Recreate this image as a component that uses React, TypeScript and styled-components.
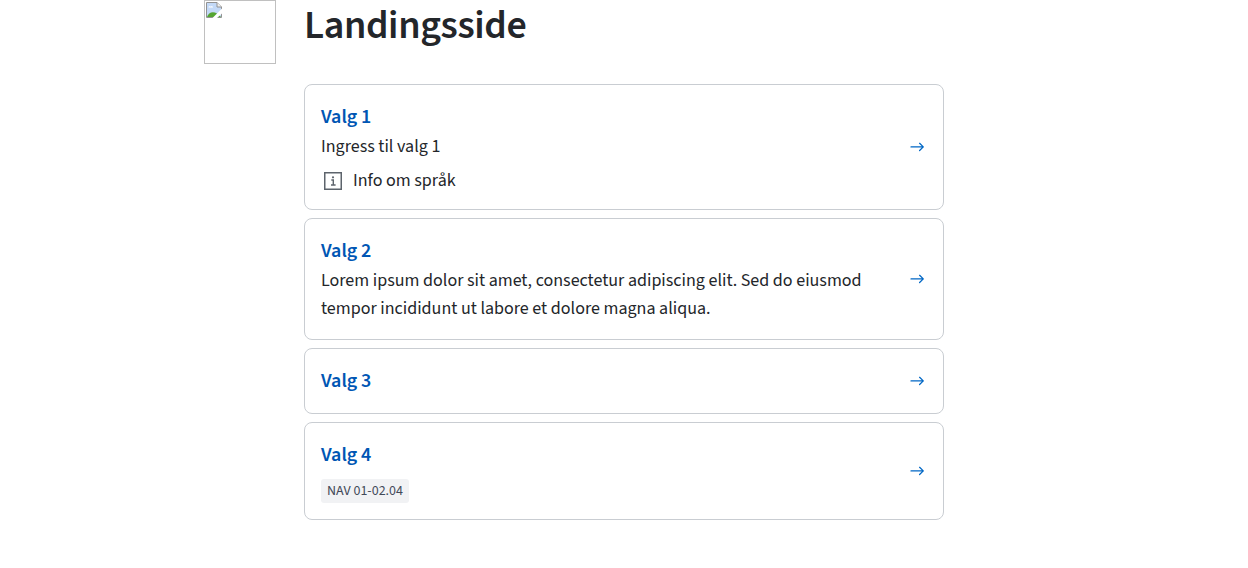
import React from "react";
import styled, { createGlobalStyle } from "styled-components";

const GlobalStyle = createGlobalStyle`
  *, *::before, *::after { box-sizing: border-box; }
  body {
    margin: 0;
    background: #fff;
    color: #23262a;
    font-family: "Source Sans 3", "Noto Sans CJK SC", sans-serif;
    font-size: 18px;
    line-height: 28px;
    -webkit-font-smoothing: antialiased;
  }
`;

const Page = styled.main`
  display: grid;
  grid-template-columns: 72px 640px;
  column-gap: 28px;
  padding-left: 204px;
  align-items: start;
`;

const ImageFrame = styled.div`
  width: 72px;
  height: 64px;
  border: 1px solid #c0c0c0;
  padding: 1px;
  line-height: 0;
`;

const Heading = styled.h1`
  margin: 0 0 32px;
  font-size: 40px;
  line-height: 52px;
  font-weight: 600;
  letter-spacing: -0.01em;
`;

const Cards = styled.div`
  display: flex;
  flex-direction: column;
  gap: 8px;
`;

const Card = styled.a`
  display: flex;
  align-items: center;
  justify-content: space-between;
  padding: 16px;
  border: 1px solid #c9cdd2;
  border-radius: 8px;
  color: inherit;
  text-decoration: none;
`;

const CardBody = styled.div`
  width: 560px;
`;

const Title = styled.h2`
  margin: 0;
  font-size: 20px;
  line-height: 32px;
  font-weight: 600;
  letter-spacing: -0.002em;
  color: #0056b4;
`;

const Text = styled.p`
  margin: 0;
`;

const InfoRow = styled.div`
  display: flex;
  align-items: center;
  gap: 8px;
  margin-top: 8px;
  line-height: 24px;
`;

const Tag = styled.span`
  display: flex;
  align-items: center;
  justify-content: center;
  width: 88px;
  height: 24px;
  margin-top: 8px;
  border-radius: 3px;
  background: #f1f2f4;
  color: #414958;
  font-size: 14px;
  line-height: 20px;
  white-space: nowrap;
`;

const Icon = styled.svg`
  display: block;
  flex: none;
`;

const Arrow = () => (
  <Icon width="20" height="20" viewBox="0 0 20 20" fill="none" stroke="#0067c5" strokeWidth="1.25">
    <path d="M4 9.9h12.3M12.6 6.3l3.7 3.6-3.7 3.6" strokeLinecap="round" strokeLinejoin="round" />
  </Icon>
);

const InfoIcon = () => (
  <Icon width="24" height="24" viewBox="0 0 24 24" fill="none" stroke="#5d646c" strokeWidth="1.5">
    <path d="M3.75 3.75h16.5v16.5H3.75z" />
    <path d="M10.3 11h2v5M10 16h4.6" strokeWidth="1.4" />
    <circle cx="12" cy="8.3" r="1.1" fill="#5d646c" stroke="none" />
  </Icon>
);

const BrokenImage = () => (
  <Icon width="16" height="16" viewBox="0 0 16 16">
    <path d="M0 0h11l5 5v11H0z" fill="#fff" />
    <path d="M1 1h10v4h4v10H1z" fill="#c3d9f7" />
    <path d="M2.5 5.5c0-1.2 1.3-1.6 2-.8.8-1 2.6-.4 2.5.8z" fill="#fff" />
    <path d="M1 15c2-6.5 9-6.5 14 0z" fill="#55a532" />
    <path d="M.5.5h10.5l4.5 4.5v10.5H.5z" fill="none" stroke="#929292" />
    <path d="M11 .5V5h4.5" fill="#eee" stroke="#929292" />
    <path d="M16 6.5 6.5 16H11l5-4.5z" fill="#fff" />
  </Icon>
);

interface LinkCardProps {
  title: string;
  children?: React.ReactNode;
}

const LinkCard = ({ title, children }: LinkCardProps) => (
  <Card>
    <CardBody>
      <Title>{title}</Title>
      {children}
    </CardBody>
    <Arrow />
  </Card>
);

export default function App() {
  return (
    <>
      <GlobalStyle />
      <Page>
        <ImageFrame>
          <BrokenImage />
        </ImageFrame>
        <div>
          <Heading>Landingsside</Heading>
          <Cards>
            <LinkCard title="Valg 1">
              <Text>Ingress til valg 1</Text>
              <InfoRow>
                <InfoIcon />
                <span>Info om språk</span>
              </InfoRow>
            </LinkCard>
            <LinkCard title="Valg 2">
              <Text>
                Lorem ipsum dolor sit amet, consectetur adipiscing elit. Sed do eiusmod tempor incididunt ut labore et
                dolore magna aliqua.
              </Text>
            </LinkCard>
            <LinkCard title="Valg 3" />
            <LinkCard title="Valg 4">
              <Tag>NAV 01-02.04</Tag>
            </LinkCard>
          </Cards>
        </div>
      </Page>
    </>
  );
}
